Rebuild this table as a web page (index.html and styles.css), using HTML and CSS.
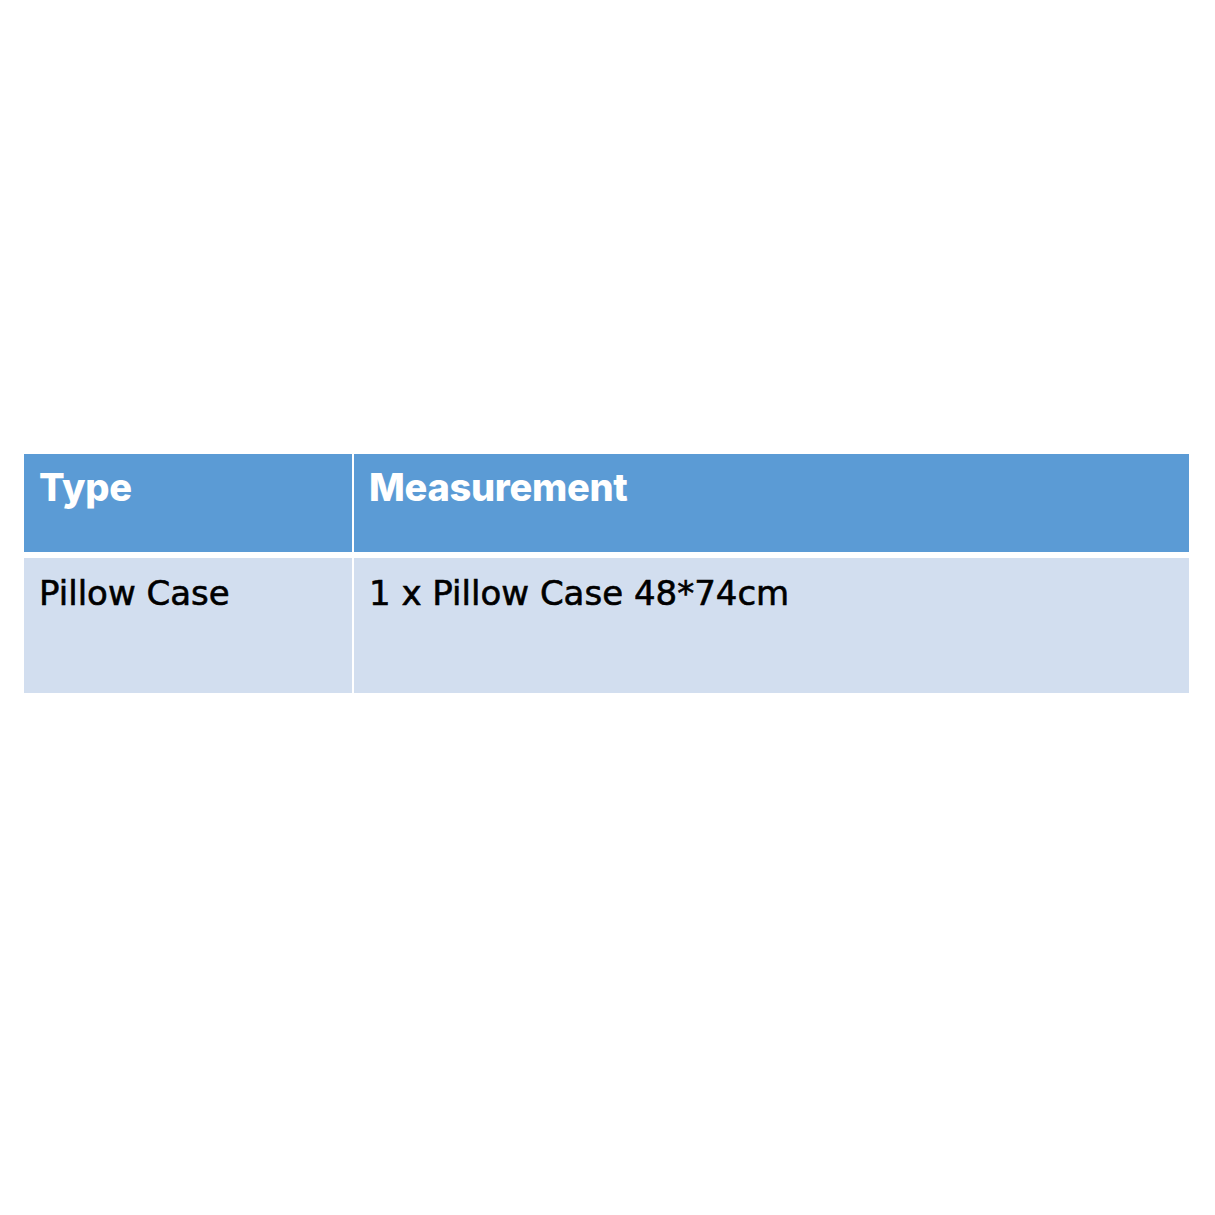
FILE: index.html
```html
<!DOCTYPE html>
<html>
<head>
<meta charset="utf-8">
<link rel="stylesheet" href="styles.css">
</head>
<body>
<div class="table">
  <div class="cell head">Type</div>
  <div class="cell head">Measurement</div>
  <div class="cell body">Pillow Case</div>
  <div class="cell body">1 x Pillow Case 48*74cm</div>
</div>
</body>
</html>
```
FILE: styles.css
```css
html, body { margin: 0; padding: 0; background: #ffffff; }
body { font-family: "DejaVu Sans", sans-serif; }
.table {
  display: grid;
  grid-template-columns: 328px 835px;
  grid-template-rows: 98px 135px;
  column-gap: 2px;
  row-gap: 6px;
  margin: 454px 0 0 24px;
  width: 1165px;
  background: #ffffff;
}
.cell { padding-left: 15px; }
.head {
  background: #5b9bd5;
  color: #ffffff;
  font-family: "Inter", sans-serif;
  font-weight: 800;
  font-size: 38px;
  line-height: 1.2;
  padding-top: 11px;
  letter-spacing: -0.3px;
}
.body {
  background: #d2deef;
  color: #000000;
  font-family: "DejaVu Sans", sans-serif;
  font-size: 34px;
  line-height: 1.2;
  padding-top: 15px;
  -webkit-text-stroke: 0.6px #000000;
}
```
